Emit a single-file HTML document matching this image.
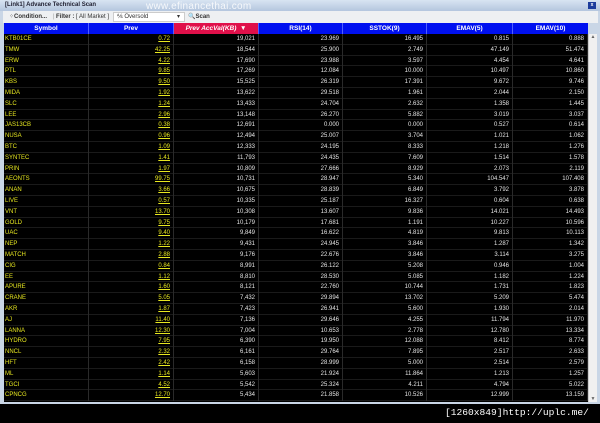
<!DOCTYPE html>
<html><head><meta charset="utf-8"><style>
*{margin:0;padding:0;box-sizing:border-box}
body{width:600px;height:423px;background:#000;position:relative;overflow:hidden;font-family:"Liberation Sans",Arial,sans-serif}
#win{position:absolute;left:0;top:0;width:600px;height:404px;background:#c9d6e6}
#title{position:absolute;left:0;top:0;width:600px;height:11px;background:linear-gradient(#d8e4f2,#b4c6de);font-size:6px;font-weight:bold;color:#223;line-height:11px;padding-left:5px}
#wm{position:absolute;left:146px;top:1px;font-size:10px;color:#fff;opacity:.85;letter-spacing:.3px}
#close{position:absolute;left:588px;top:2px;width:8px;height:7px;background:#1c3c9c;color:#fff;font-size:5px;text-align:center;line-height:7px;font-weight:bold}
#tb{position:absolute;left:3px;top:11px;width:595px;height:12px;background:#eef0f2;font-size:6px;line-height:12px;color:#333}
#tb span{position:absolute;top:0}
#grid{position:absolute;left:4px;top:23px;width:584px;height:379px;background:#000}
.hd{position:absolute;top:0;height:11px;background:#0010f0;color:#fff;font-size:6.5px;font-weight:bold;text-align:center;line-height:11px;border-right:1px solid #5060ff}
.row{position:absolute;left:0;width:584px;height:10.8px;border-bottom:1px solid #1a1a1a;font-size:6px;line-height:10px}
.row div{position:absolute;top:0;height:10.8px;text-align:right;padding-right:3px;color:#e4e4e4;border-right:1px solid #2a2a2a}
.row .s{text-align:left;padding-left:1px;color:#e8e820}
.row .p{color:#e8e820;text-decoration:underline}
#sb{position:absolute;left:588px;top:34px;width:9px;height:368px;background:#f0f0f0;border-left:1px solid #ccc}
#foot{position:absolute;left:445px;top:404px;font-family:"Liberation Mono",monospace;font-size:9.6px;color:#fff;line-height:18px;white-space:nowrap}
</style></head><body>
<div id="win">
<div id="title">[Link1] Advance Technical Scan</div>
<div id="wm">www.efinancethai.com</div>
<div id="close">x</div>
<div id="tb">
<span style="left:6px">⁘<b>Condition...</b></span>
<span style="left:50px;color:#999">|</span>
<span style="left:53px"><b>Filter :</b> [ All Market ]</span>
<span style="left:110px;width:72px;height:10px;top:1px;background:#fff;border:1px solid #ccc;line-height:9px;padding-left:3px;overflow:hidden">⅍ Oversold<span style="position:absolute;left:63px">▾</span></span>
<span style="left:185px">🔍<b>Scan</b></span>
</div>
<div id="grid">
<div class="hd" style="left:0;width:85px">Symbol</div>
<div class="hd" style="left:85px;width:85px">Prev</div>
<div class="hd" style="left:170px;width:85px;background:#e0104a;font-style:italic">Prev AccVal(KB) &nbsp;▼</div>
<div class="hd" style="left:255px;width:84px">RSI(14)</div>
<div class="hd" style="left:339px;width:84px">SSTOK(9)</div>
<div class="hd" style="left:423px;width:86px">EMAV(5)</div>
<div class="hd" style="left:509px;width:75px;border:0">EMAV(10)</div>
<div id="rows"></div>
</div>
<div id="sb"><div style="font-size:5px;color:#666;text-align:center">▲</div><div style="position:absolute;bottom:0;width:8px;font-size:5px;color:#666;text-align:center">▼</div></div>
</div>
<div id="foot">[1260x849]http://uplc.me/</div>
<script>
var d=`KTB01CE 0.72 19,021 23.969 16.495 0.815 0.888
TMW 42.25 18,544 25.900 2.749 47.149 51.474
ERW 4.22 17,690 23.988 3.597 4.454 4.641
PTL 9.85 17,269 12.084 10.000 10.497 10.860
KBS 9.50 15,525 26.319 17.391 9.672 9.746
MIDA 1.92 13,622 29.518 1.961 2.044 2.150
SLC 1.24 13,433 24.704 2.632 1.358 1.445
LEE 2.96 13,148 26.270 5.882 3.019 3.037
JAS13CB 0.38 12,691 0.000 0.000 0.527 0.614
NUSA 0.96 12,494 25.007 3.704 1.021 1.062
BTC 1.09 12,333 24.195 8.333 1.218 1.276
SYNTEC 1.41 11,793 24.435 7.609 1.514 1.578
PRIN 1.97 10,809 27.666 8.929 2.073 2.119
AEONTS 99.75 10,731 28.947 5.340 104.547 107.408
ANAN 3.66 10,675 28.839 6.849 3.792 3.878
LIVE 0.57 10,335 25.187 16.327 0.604 0.638
VNT 13.70 10,308 13.607 9.836 14.021 14.493
GOLD 9.75 10,179 17.681 1.191 10.227 10.596
UAC 9.40 9,849 16.622 4.819 9.813 10.113
NEP 1.22 9,431 24.945 3.846 1.287 1.342
MATCH 2.88 9,176 22.676 3.846 3.114 3.275
CIG 0.84 8,991 26.122 5.208 0.946 1.004
EE 1.12 8,810 28.530 5.085 1.182 1.224
APURE 1.60 8,121 22.760 10.744 1.731 1.823
CRANE 5.05 7,432 29.894 13.702 5.209 5.474
AKR 1.87 7,423 26.941 5.600 1.930 2.014
AJ 11.40 7,136 29.646 4.255 11.794 11.970
LANNA 12.30 7,004 10.653 2.778 12.780 13.334
HYDRO 7.95 6,390 19.950 12.088 8.412 8.774
NNCL 2.32 6,161 29.764 7.895 2.517 2.633
HFT 2.42 6,158 28.999 5.000 2.514 2.579
ML 1.14 5,603 21.924 11.864 1.213 1.257
TGCI 4.52 5,542 25.324 4.211 4.794 5.022
CPNCG 12.70 5,434 21.858 10.526 12.999 13.159`.split("\n");
var L=[0,85,170,255,339,423,509],W=[85,85,85,84,84,86,75],h="";
d.forEach(function(r,i){var c=r.split(" ");h+='<div class="row" style="top:'+(11+i*10.8)+'px">';
c.forEach(function(v,j){h+='<div class="'+(j==0?'s':j==1?'p':'')+'" style="left:'+L[j]+'px;width:'+W[j]+'px">'+v+'</div>'});h+='</div>'});
document.getElementById('rows').innerHTML=h;
</script>
</body></html>
